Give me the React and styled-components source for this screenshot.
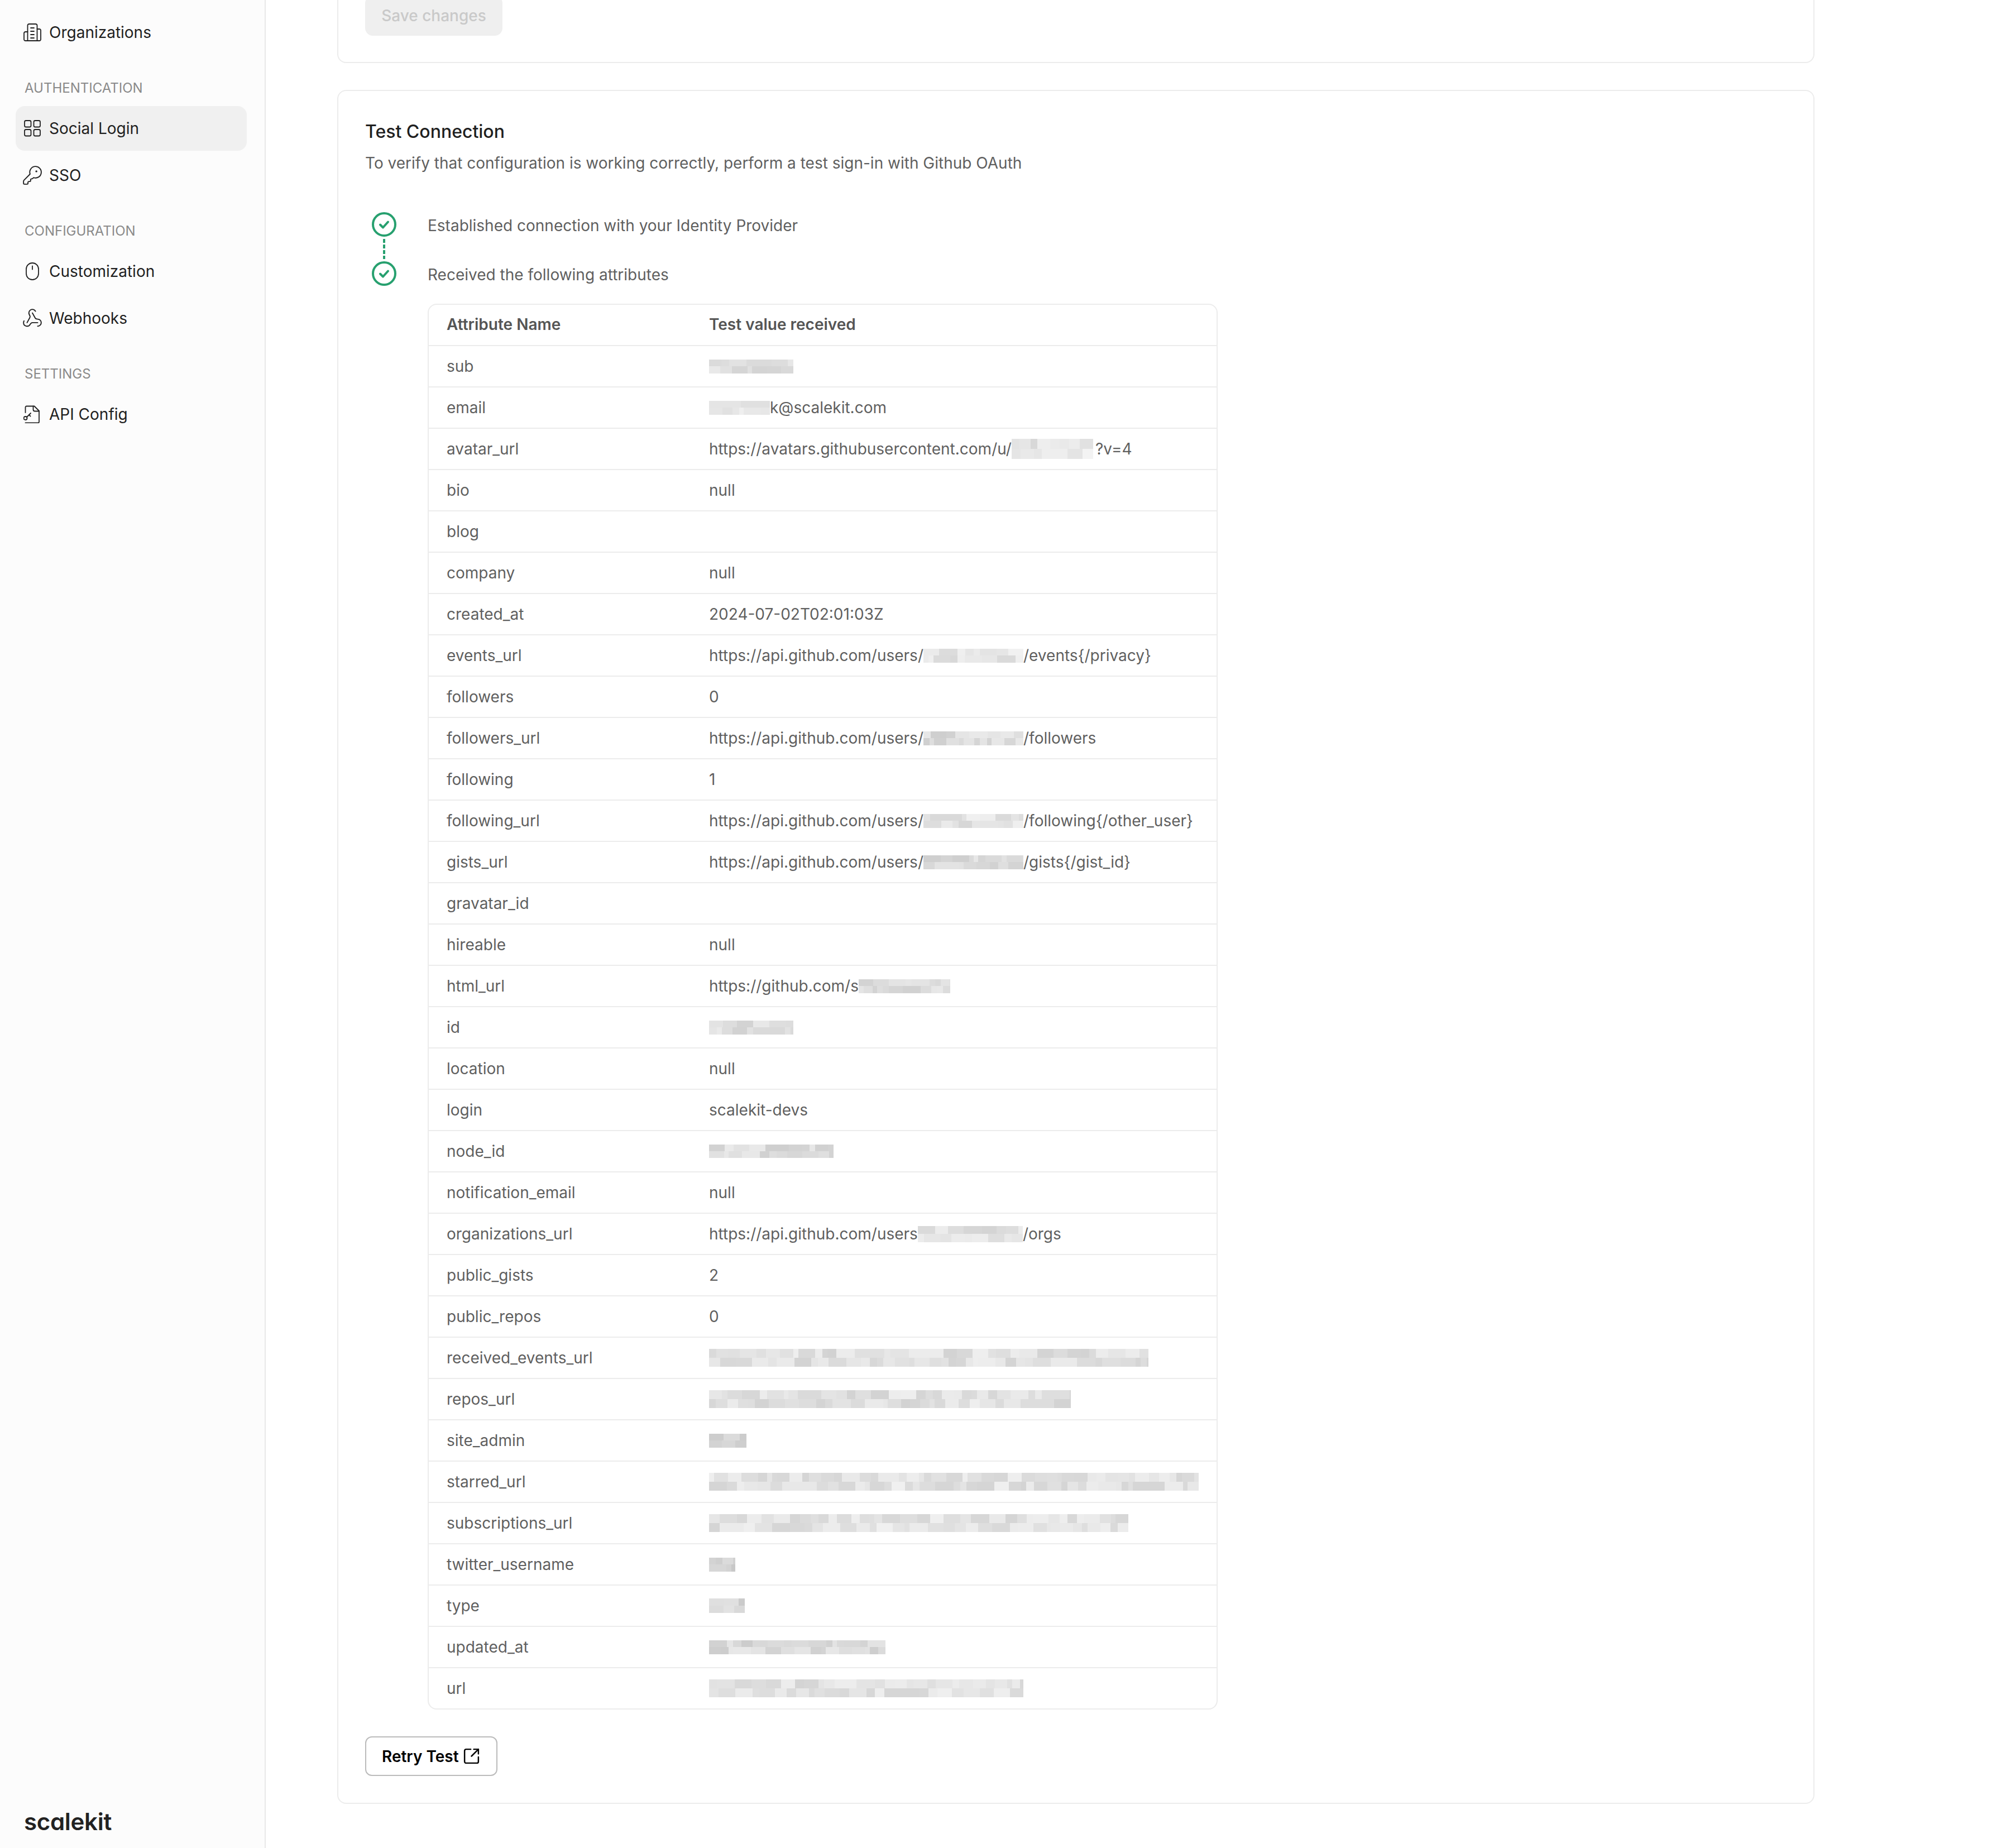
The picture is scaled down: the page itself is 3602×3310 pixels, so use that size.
import React from "react";
import styled, { createGlobalStyle } from "styled-components";
import { KeyRound, SquareArrowOutUpRight, Webhook } from "lucide-react";

const GlobalStyle = createGlobalStyle`
    html, body {
        margin: 0;
        padding: 0;
        background: #fff;
    }
    * {
        box-sizing: border-box;
    }
    body {
        font-family: Inter, "Liberation Sans", sans-serif;
    }
`;

const Page = styled.div`
    display: flex;
    width: 3602px;
    height: 3310px;
    overflow: hidden;
`;

const Sidebar = styled.aside`
    width: 476px;
    flex: none;
    display: flex;
    flex-direction: column;
    padding: 18px 32px 24px 28px;
    background: #fcfcfc;
    border-right: 2px solid #e8e8e8;
`;

const NavGroup = styled.div`
    display: flex;
    flex-direction: column;
    gap: 4px;
`;

const NavLabel = styled.div`
    height: 32px;
    margin: 44px 0 16px;
    padding-left: 16px;
    font-size: 24px;
    line-height: 32px;
    color: #8a8a8a;
    text-transform: uppercase;
`;

const NavItem = styled.div`
    display: flex;
    align-items: center;
    gap: 14px;
    height: 80px;
    padding-left: 14px;
    border-radius: 16px;
    font-size: 28px;
    color: #1f1f1f;
    background: ${(p) => (p.$active ? "#f0f0f0" : "transparent")};

    > svg {
        flex: none;
    }
`;

const NavSvg = styled.svg`
    width: 32px;
    height: 32px;
`;

// lucide draws inside a 24 box with a margin, so these two are enlarged to fill 32px
const KeyIcon = styled(KeyRound)`
    width: 38px;
    height: 38px;
    margin: -3px;
`;

const HookIcon = styled(Webhook)`
    width: 38px;
    height: 38px;
    margin: -3px;
`;

const Logo = styled.div`
    margin-top: auto;
    padding-left: 15px;
    font-size: 42px;
    line-height: 46px;
    font-weight: 600;
    letter-spacing: -0.3px;
    color: #222;
    font-feature-settings: "cv11" 1;
`;

const Main = styled.main`
    flex: 1;
    min-width: 0;
    display: flex;
    flex-direction: column;
    gap: 48px;
    padding-left: 128px;
`;

const Card = styled.section`
    width: 2646px;
    padding: 48px;
    background: #fff;
    border: 2px solid #ececec;
    border-radius: 16px;
`;

// the card above is scrolled mostly out of view
const ScrolledCard = styled(Card)`
    margin-top: -200px;
    height: 313px;
    padding-top: 190px;
`;

const SaveButton = styled.button`
    display: block;
    width: 246px;
    height: 72px;
    padding: 0;
    border: none;
    border-radius: 14px;
    background: #efefef;
    color: #c9c9c9;
    font: 500 28px Inter, sans-serif;
`;

const Title = styled.h2`
    margin: 3px 0 0;
    font-size: 32px;
    line-height: 44px;
    font-weight: 500;
    color: #1f1f1f;
`;

const Description = styled.p`
    margin: 12px 0 0;
    font-size: 28px;
    line-height: 44px;
    color: #5f5f5f;
`;

const Steps = styled.div`
    display: flex;
    flex-direction: column;
    margin: 66px 0 0 12px;
`;

const Step = styled.div`
    display: flex;
    align-items: center;
    height: 44px;
    gap: 56px;
    font-size: 28px;
    color: #5f5f5f;

    svg {
        flex: none;
    }

    span {
        padding-top: 4px;
    }
`;

const StepLine = styled.div`
    width: 4px;
    height: 44px;
    margin-left: 20px;
    padding: 4px 0;
    background: repeating-linear-gradient(to bottom, #27a06f 0 7px, transparent 7px 10px) content-box;
`;

const Table = styled.div`
    width: 1415px;
    margin: 32px 0 0 112px;
    border: 2px solid #ececec;
    border-radius: 16px;
`;

const Row = styled.div`
    display: flex;
    align-items: center;
    height: 74px;
    padding-left: 32px;
    font-size: 28px;
    font-weight: ${(p) => (p.$head ? 600 : 400)};
    color: ${(p) => (p.$head ? "#555" : "#5f5f5f")};
    border-top: ${(p) => (p.$head ? "none" : "2px solid #ececec")};
    margin-top: ${(p) => (p.$head ? "-2px" : "0")};
`;

const NameCell = styled.div`
    width: 470px;
    flex: none;
`;

const ValueCell = styled.div`
    display: flex;
    align-items: center;
    white-space: nowrap;
`;

const QueryText = styled.span`
    margin-left: 4px;
`;

const BlurBox = styled.span`
    display: inline-flex;
    flex-direction: column;
    flex: none;
    overflow: hidden;
`;

const BlurStrip = styled.span`
    display: flex;
    flex: 1;
`;

const RetryButton = styled.button`
    display: inline-flex;
    align-items: center;
    gap: 9px;
    width: 237px;
    height: 71px;
    margin-top: 48px;
    padding: 0 0 0 28px;
    background: #fff;
    border: 2px solid #bbb;
    border-radius: 12px;
    font: 600 28px Inter, sans-serif;
    color: #000;
`;

const RetryIcon = styled(SquareArrowOutUpRight)`
    width: 33px;
    height: 33px;
    margin: -3px;
`;

const BuildingIcon = () => (
    <NavSvg viewBox="0 0 32 32" fill="none" stroke="currentColor" strokeWidth="1.800" strokeLinecap="round" strokeLinejoin="round">
        <path d="M7.500 31V3.500a2.500 2.500 0 0 1 2.500-2.500h12a2.500 2.500 0 0 1 2.500 2.500V31" />
        <path d="M7.500 15H3.500A2.500 2.500 0 0 0 1 17.500V28.500A2.500 2.500 0 0 0 3.500 31h25a2.500 2.500 0 0 0 2.500-2.500V12.500A2.500 2.500 0 0 0 28.500 10h-4" />
        <path d="M13 8h6M13 14h6M13 20h6M13 26h6" />
    </NavSvg>
);

const GridIcon = () => (
    <NavSvg viewBox="0 0 32 32" fill="none" stroke="currentColor" strokeWidth="1.800">
        <rect x="2" y="2" width="11.500" height="11.500" rx="2.500" />
        <rect x="18.500" y="2" width="11.500" height="11.500" rx="2.500" />
        <rect x="2" y="18" width="11.500" height="11.500" rx="2.500" />
        <rect x="18.500" y="18" width="11.500" height="11.500" rx="2.500" />
    </NavSvg>
);

const MouseIcon = () => (
    <NavSvg viewBox="0 0 32 32" fill="none" stroke="currentColor" strokeWidth="1.800" strokeLinecap="round">
        <rect x="5" y="1" width="22" height="30" rx="11" />
        <path d="M16 6.500v6" />
    </NavSvg>
);

const FileKeyIcon = () => (
    <NavSvg viewBox="0 0 32 32" fill="none" stroke="currentColor" strokeWidth="1.800" strokeLinecap="round" strokeLinejoin="round">
        <path d="M3.500 13V3.500A2 2 0 0 1 5.500 1.500H19.500L28 10V29.500A2 2 0 0 1 26 31.500H3.500" />
        <path d="M17.500 1.500V7.500A3 3 0 0 0 20.500 10.500H28" />
        <circle cx="3.500" cy="23" r="3" />
        <path d="M6 21l7-7M10 17l2.500 2.500" />
    </NavSvg>
);

const CheckCircle = () => (
    <svg width="44" height="44" viewBox="0 0 44 44" fill="none" stroke="#27a06f">
        <circle cx="22" cy="22" r="20" strokeWidth="4" />
        <path d="M15 22.500l5 5 9-10" strokeWidth="4" strokeLinecap="round" strokeLinejoin="round" />
    </svg>
);

// seeded so the pixelated patches come out the same on every render
const makeRandom = (seed) => {
    let s = seed * 2654435761;
    return () => {
        s = (s + 0x6d2b79f5) | 0;
        let t = Math.imul(s ^ (s >>> 15), 1 | s);
        t = (t + Math.imul(t ^ (t >>> 7), 61 | t)) ^ t;
        return ((t ^ (t >>> 14)) >>> 0) / 4294967296;
    };
};

const makeStrip = (random, width, base) => {
    const cells = [];
    let left = width;
    while (left > 0) {
        const w = Math.min(left, 8 + Math.floor(random() * 26));
        const g = Math.round(base + random() * 28 - 12);
        cells.push({ w, color: `rgb(${g},${g},${g})` });
        left -= w;
    }
    return cells;
};

const Blur = ({ w, h = 25, seed = 1, base = 218 }) => {
    const random = makeRandom(seed);
    const strips = [makeStrip(random, w, base), makeStrip(random, w, base)];
    return (
        <BlurBox style={{ width: w, height: h }}>
            {strips.map((cells, i) => (
                <BlurStrip key={i}>
                    {cells.map((c, j) => (
                        <span key={j} style={{ width: c.w, background: c.color }} />
                    ))}
                </BlurStrip>
            ))}
        </BlurBox>
    );
};

const USERS = "https://api.github.com/users/";

const rows = [
    ["sub", <Blur w={151} seed={1} />],
    ["email", <><Blur w={109} seed={2} base={226} />k@scalekit.com</>],
    ["avatar_url", <>https://avatars.githubusercontent.com/u/<Blur w={146} h={36} seed={3} base={228} /><QueryText>?v=4</QueryText></>],
    ["bio", "null"],
    ["blog", ""],
    ["company", "null"],
    ["created_at", "2024-07-02T02:01:03Z"],
    ["events_url", <>{USERS}<Blur w={179} seed={4} base={226} />/events{"{/privacy}"}</>],
    ["followers", "0"],
    ["followers_url", <>{USERS}<Blur w={179} seed={5} />/followers</>],
    ["following", "1"],
    ["following_url", <>{USERS}<Blur w={179} seed={6} base={226} />/following{"{/other_user}"}</>],
    ["gists_url", <>{USERS}<Blur w={179} seed={7} />/gists{"{/gist_id}"}</>],
    ["gravatar_id", ""],
    ["hireable", "null"],
    ["html_url", <>https://github.com/s<Blur w={164} seed={8} /></>],
    ["id", <Blur w={151} seed={9} />],
    ["location", "null"],
    ["login", "scalekit-devs"],
    ["node_id", <Blur w={223} h={24} seed={10} />],
    ["notification_email", "null"],
    ["organizations_url", <>https://api.github.com/users<Blur w={188} h={29} seed={11} base={224} />/orgs</>],
    ["public_gists", "2"],
    ["public_repos", "0"],
    ["received_events_url", <Blur w={787} h={32} seed={12} base={222} />],
    ["repos_url", <Blur w={648} h={32} seed={13} base={222} />],
    ["site_admin", <Blur w={67} seed={14} base={208} />],
    ["starred_url", <Blur w={877} h={32} seed={15} base={224} />],
    ["subscriptions_url", <Blur w={751} h={32} seed={16} base={224} />],
    ["twitter_username", <Blur w={47} seed={17} base={210} />],
    ["type", <Blur w={64} h={26} seed={18} base={212} />],
    ["updated_at", <Blur w={316} seed={19} base={216} />],
    ["url", <Blur w={563} h={32} seed={20} base={224} />],
];

const App = () => (
    <Page>
        <GlobalStyle />
        <Sidebar>
            <NavItem><BuildingIcon />Organizations</NavItem>

            <NavLabel>Authentication</NavLabel>
            <NavGroup>
                <NavItem $active><GridIcon />Social Login</NavItem>
                <NavItem><KeyIcon strokeWidth={1.2} />SSO</NavItem>
            </NavGroup>

            <NavLabel>Configuration</NavLabel>
            <NavGroup>
                <NavItem><MouseIcon />Customization</NavItem>
                <NavItem><HookIcon strokeWidth={1.2} />Webhooks</NavItem>
            </NavGroup>

            <NavLabel>Settings</NavLabel>
            <NavItem><FileKeyIcon />API Config</NavItem>

            <Logo>scalekit</Logo>
        </Sidebar>

        <Main>
            <ScrolledCard>
                <SaveButton>Save changes</SaveButton>
            </ScrolledCard>

            <Card>
                <Title>Test Connection</Title>
                <Description>To verify that configuration is working correctly, perform a test sign-in with Github OAuth</Description>

                <Steps>
                    <Step><CheckCircle /><span>Established connection with your Identity Provider</span></Step>
                    <StepLine />
                    <Step><CheckCircle /><span>Received the following attributes</span></Step>
                </Steps>

                <Table>
                    <Row $head>
                        <NameCell>Attribute Name</NameCell>
                        <ValueCell>Test value received</ValueCell>
                    </Row>
                    {rows.map(([name, value]) => (
                        <Row key={name}>
                            <NameCell>{name}</NameCell>
                            <ValueCell>{value}</ValueCell>
                        </Row>
                    ))}
                </Table>

                <RetryButton>Retry Test <RetryIcon strokeWidth={1.8} /></RetryButton>
            </Card>
        </Main>
    </Page>
);

export default App;
